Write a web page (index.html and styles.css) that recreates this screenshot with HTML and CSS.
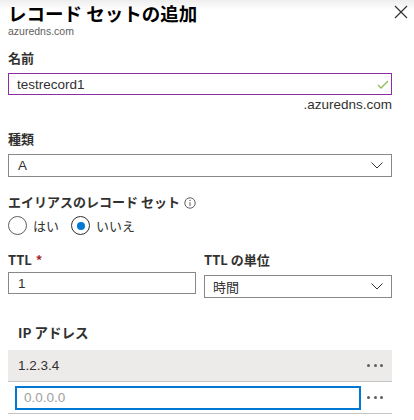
FILE: index.html
```html
<!DOCTYPE html>
<html lang="ja">
<head>
<meta charset="utf-8">
<link rel="stylesheet" href="styles.css">
</head>
<body>
<div class="panel">
  <header class="header">
    <div class="titles">
      <h1 class="title">レコード セットの追加</h1>
      <div class="subtitle">azuredns.com</div>
    </div>
    <button class="close" aria-label="閉じる">
      <svg width="14" height="14" viewBox="0 0 14 14"><path d="M1 1L13 13M13 1L1 13" stroke="#323130" stroke-width="1.2" fill="none"/></svg>
    </button>
  </header>

  <div class="form">
    <label class="label label-name">名前</label>
    <div class="field field-name">
      <span class="value">testrecord1</span>
      <svg class="check" width="12" height="10" viewBox="0 0 12 10"><path d="M1 5L4 8L11 1" stroke="#8cbd5a" stroke-width="1.3" fill="none"/></svg>
    </div>
    <div class="suffix">.azuredns.com</div>

    <label class="label label-type">種類</label>
    <div class="field select select-type">
      <span class="value">A</span>
      <svg class="chev" width="12" height="7" viewBox="0 0 12 7"><path d="M0.5 0.5L6 6L11.5 0.5" stroke="#323130" stroke-width="1" fill="none"/></svg>
    </div>

    <div class="label label-alias">エイリアスのレコード セット
      <svg class="info" width="12" height="12" viewBox="0 0 12 12"><circle cx="6" cy="6" r="5.2" stroke="#605e5c" stroke-width="1" fill="none"/><path d="M6 5.2V9" stroke="#605e5c" stroke-width="1"/><circle cx="6" cy="3.5" r="0.7" fill="#605e5c"/></svg>
    </div>
    <div class="radios">
      <div class="radio"><span class="circle"></span><span class="rtext">はい</span></div>
      <div class="radio"><span class="circle checked"></span><span class="rtext">いいえ</span></div>
    </div>

    <div class="ttl-grid">
      <div class="col">
        <div class="label">TTL <span class="req">*</span></div>
        <div class="field field-ttl"><span class="value">1</span></div>
      </div>
      <div class="col">
        <div class="label">TTL の単位</div>
        <div class="field select select-unit">
          <span class="value">時間</span>
          <svg class="chev" width="12" height="7" viewBox="0 0 12 7"><path d="M0.5 0.5L6 6L11.5 0.5" stroke="#323130" stroke-width="1" fill="none"/></svg>
        </div>
      </div>
    </div>

    <div class="label ip-label">IP アドレス</div>
    <div class="ip-table">
      <div class="ip-row ip-row-filled">
        <span class="ip-text">1.2.3.4</span>
        <span class="dots"><i></i><i></i><i></i></span>
      </div>
      <div class="ip-row ip-row-edit">
        <div class="ip-input"><span class="placeholder">0.0.0.0</span></div>
        <span class="dots"><i></i><i></i><i></i></span>
      </div>
    </div>
  </div>
</div>
</body>
</html>
```

FILE: styles.css
```css
* { box-sizing: border-box; }
html, body { margin: 0; padding: 0; background: #fff; }
body {
  font-family: "Liberation Sans", "Noto Sans CJK JP", sans-serif;
  color: #323130;
  width: 414px;
  height: 420px;
  overflow: hidden;
}
.panel { position: relative; }
.header {
  display: flex;
  justify-content: space-between;
  align-items: flex-start;
  padding: 0 4px 0 8px;
  background: linear-gradient(#eeeeee 0px, #ffffff 10px);
}
.title {
  margin: 0;
  font-size: 18.5px;
  line-height: 26px;
  font-weight: 700;
  color: #000;
  font-family: "Noto Sans CJK JP", sans-serif;
}
.subtitle {
  font-size: 10.5px;
  line-height: 12px;
  color: #605e5c;
  margin-top: -1px;
}
.close {
  border: 0;
  background: transparent;
  padding: 0;
  margin-top: 5px;
  width: 16px;
  height: 14px;
  display: flex;
}
.form {
  width: 384px;
  margin-left: 8px;
  display: flex;
  flex-direction: column;
}
.label {
  font-family: "Noto Sans CJK JP", sans-serif;
  font-size: 13px;
  line-height: 18px;
  font-weight: 700;
  color: #323130;
  display: flex;
  align-items: center;
  gap: 0.3em;
}
.label-name { margin-top: 12px; }
.field {
  position: relative;
  height: 22px;
  border: 1px solid #8a8886;
  display: flex;
  align-items: center;
  padding-left: 9px;
  font-size: 13.5px;
  color: #323130;
}
.field-name {
  margin-top: 6px;
  border: 1.5px solid #8a2da5;
  padding-left: 8px;
}
.check { position: absolute; right: 2px; top: 6px; }
.suffix {
  text-align: right;
  font-size: 13.5px;
  line-height: 18px;
  margin-top: 1px;
  color: #323130;
}
.label-type { margin-top: 16px; }
.select { height: 23px; }
.select-type { margin-top: 6px; }
.chev { position: absolute; right: 8px; top: 7px; }
.label-alias { margin-top: 16px; font-weight: 600; gap: 4px; }
.info { margin-top: 1px; }
.radios {
  display: flex;
  gap: 12px;
  margin-top: 5px;
  height: 19px;
  align-items: center;
}
.radio { display: flex; align-items: center; gap: 6px; }
.circle {
  width: 19px;
  height: 19px;
  border: 1px solid #605e5c;
  border-radius: 50%;
  position: relative;
  display: block;
}
.circle.checked { border-color: #323130; }
.circle.checked::after {
  content: "";
  position: absolute;
  left: 4.5px;
  top: 4.5px;
  width: 8px;
  height: 8px;
  border-radius: 50%;
  background: #0078d4;
}
.rtext {
  font-family: "Noto Sans CJK JP", sans-serif;
  font-size: 13px;
  line-height: 18px;
  color: #323130;
}
.ttl-grid {
  display: grid;
  grid-template-columns: 188px 188px;
  column-gap: 8px;
  margin-top: 16px;
}
.col { display: flex; flex-direction: column; }
.req { color: #a4262c; font-weight: 700; }
.field-ttl { margin-top: 3px; }
.select-unit { margin-top: 6px; padding-left: 8px; font-family: "Noto Sans CJK JP", sans-serif; font-size: 13px; }
.ip-label { margin-top: 25px; margin-left: 10px; font-size: 13.5px; }
.ip-table { margin-top: 9px; display: flex; flex-direction: column; }
.ip-row {
  display: flex;
  align-items: center;
  justify-content: space-between;
  border-bottom: 1px solid #c8c6c4;
}
.ip-row-filled {
  height: 32px;
  background: #edebe9;
  padding: 0 9px 0 10px;
}
.ip-text { font-size: 13.5px; color: #323130; }
.ip-row-edit {
  height: 32px;
  padding: 0 9px 0 7px;
}
.ip-input {
  width: 346px;
  height: 24px;
  border: 2px solid #0078d4;
  display: flex;
  align-items: center;
  padding-left: 7px;
}
.placeholder { font-size: 13.5px; color: #a19f9d; }
.dots { display: flex; gap: 3.5px; }
.dots i {
  display: block;
  width: 3px;
  height: 3px;
  border-radius: 50%;
  background: #605e5c;
}
```
